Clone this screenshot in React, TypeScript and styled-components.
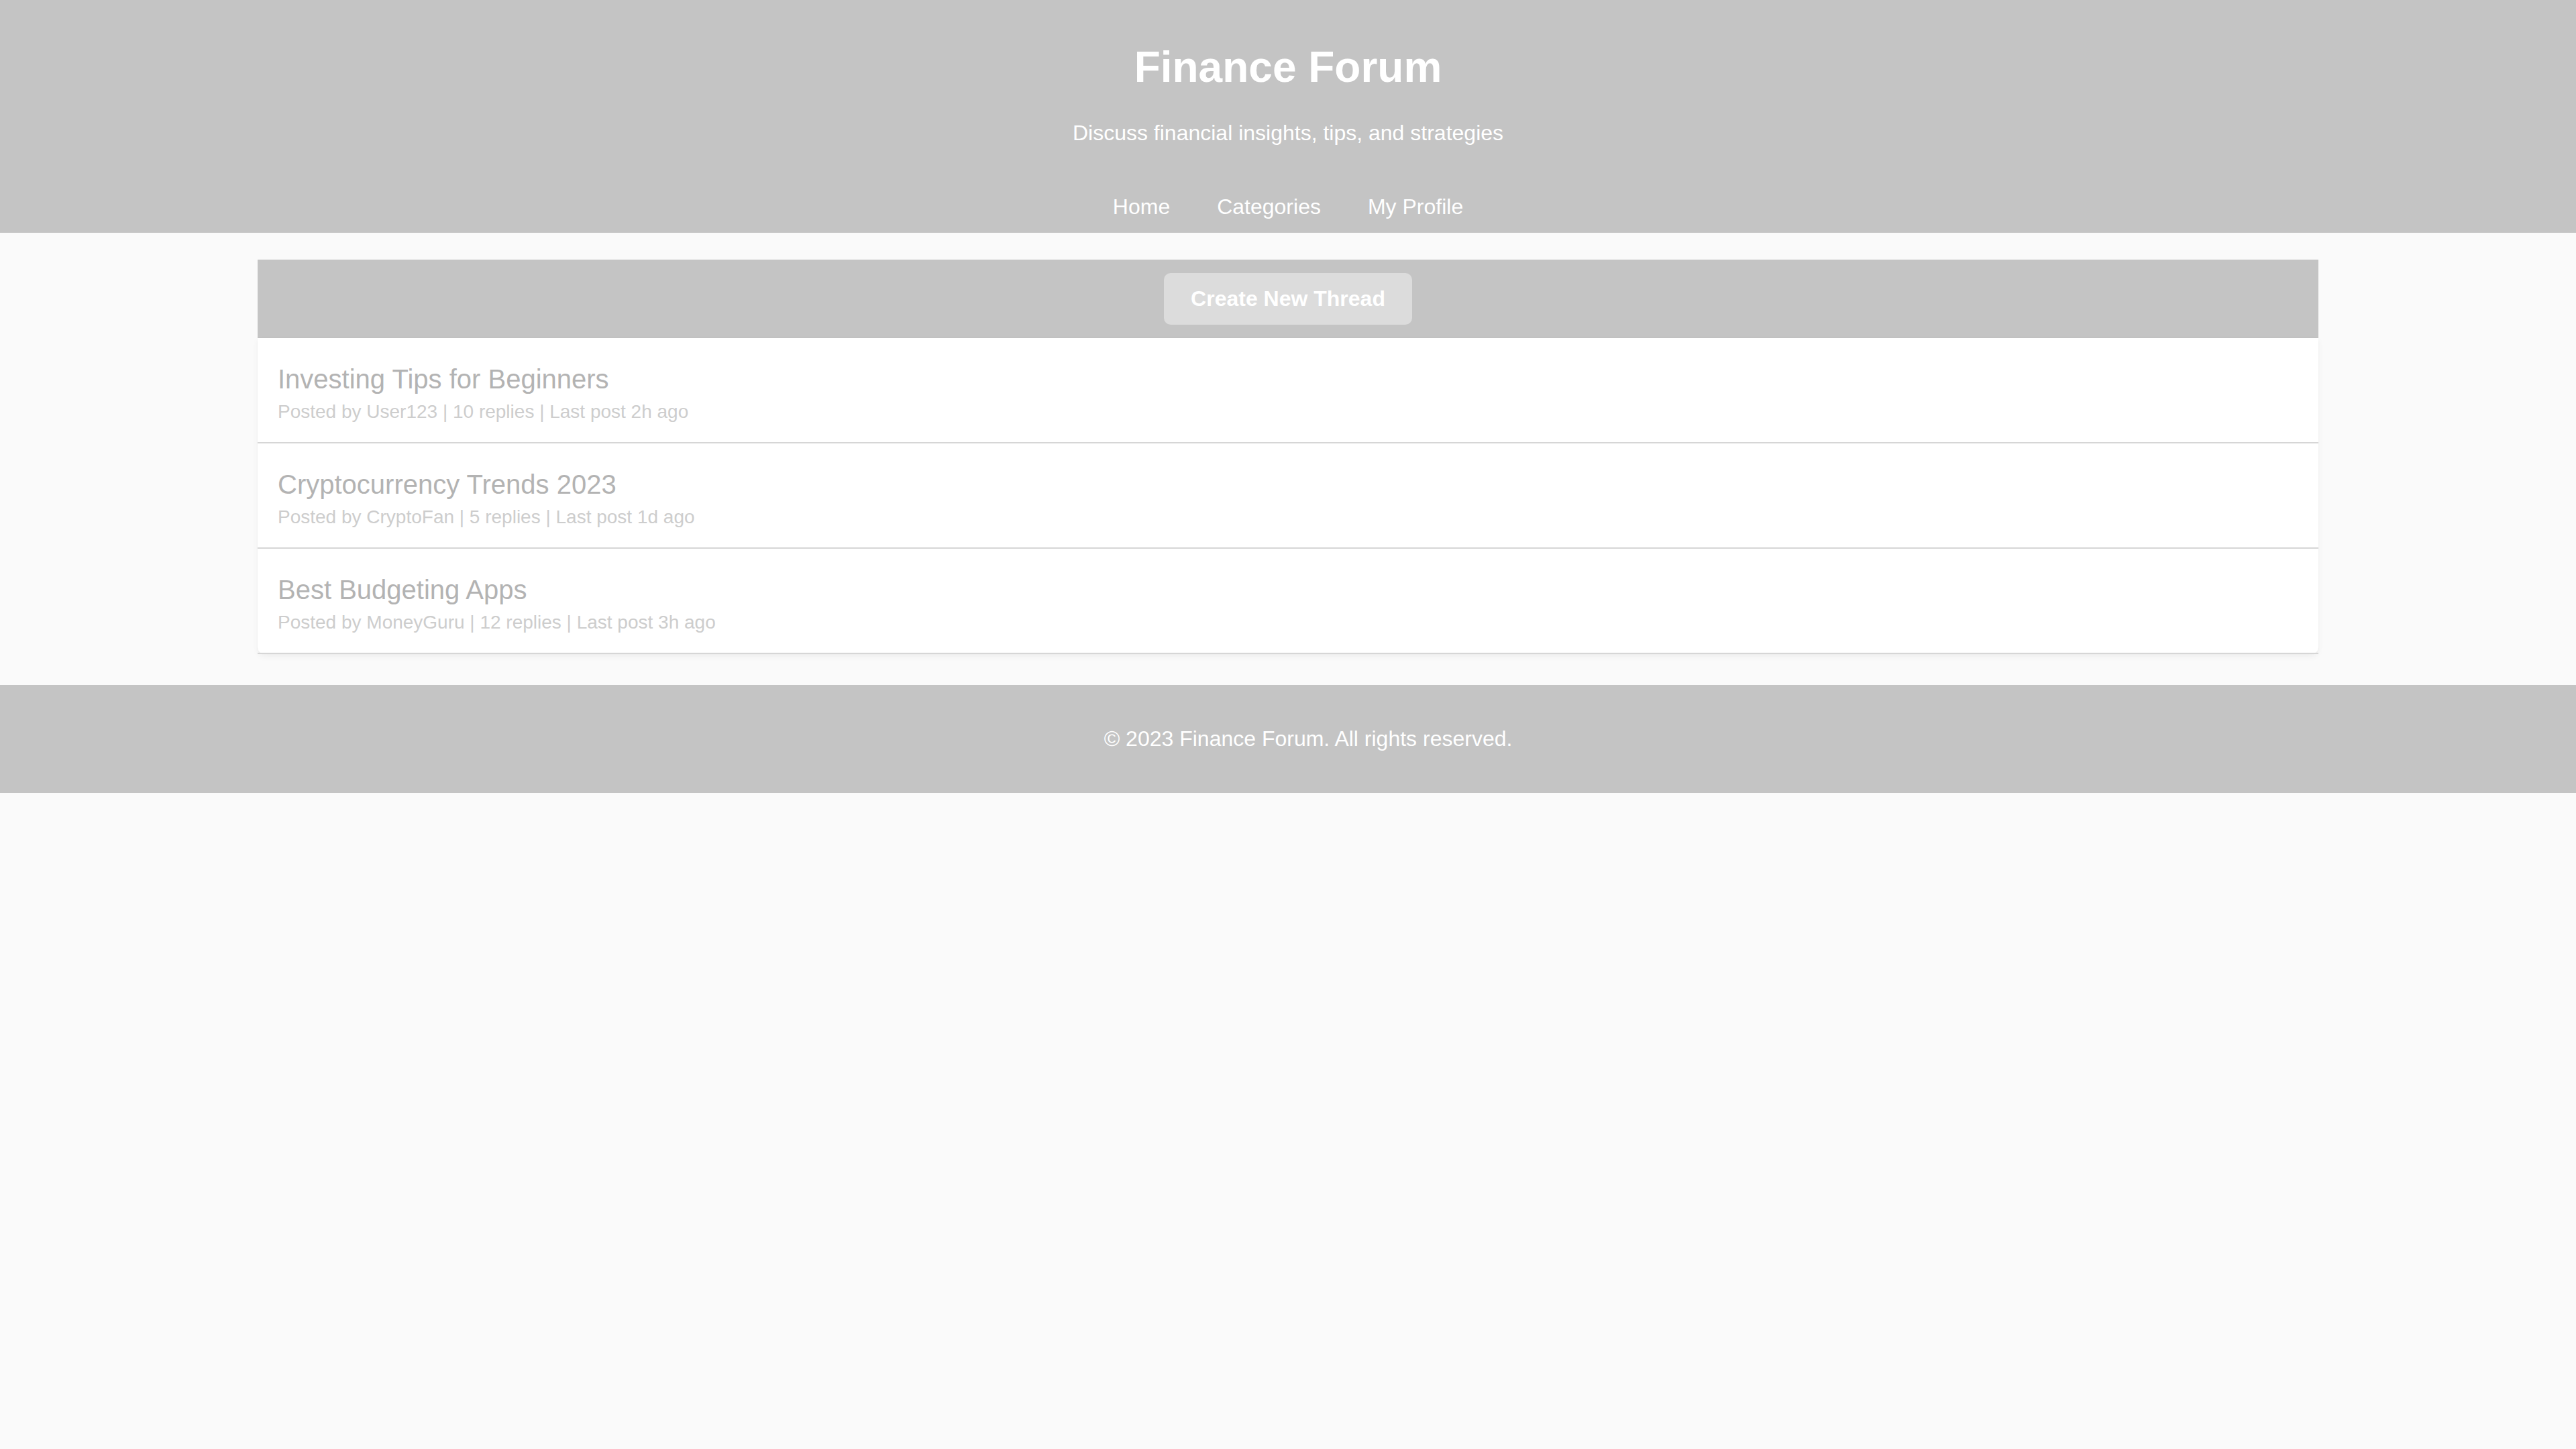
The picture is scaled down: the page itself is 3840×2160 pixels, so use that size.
import React from "react";
import styled, { createGlobalStyle } from "styled-components";

const GlobalStyle = createGlobalStyle`
  html, body {
    margin: 0;
    padding: 0;
    background: #fafafa;
    font-family: "Liberation Sans", Arial, sans-serif;
  }
  * { box-sizing: border-box; }
`;

const Header = styled.header`
  background: #c4c4c4;
  color: #ffffff;
  text-align: center;
  padding: 20px;
`;

const Title = styled.h1`
  margin: 42.88px 0 0;
  font-size: 64px;
  font-weight: 700;
  line-height: normal;
`;

const Subtitle = styled.p`
  margin: 42.88px 0 0;
  font-size: 32px;
  line-height: normal;
`;

const Nav = styled.nav`
  margin-top: 73px;
  display: flex;
  justify-content: center;
  gap: 70px;
`;

const NavLink = styled.a`
  color: #ffffff;
  text-decoration: none;
  font-size: 32px;
  line-height: normal;
`;

const Main = styled.main`
  width: 80%;
  margin: 40px auto 46px;
`;

const Toolbar = styled.div`
  background: #c4c4c4;
  padding: 20px;
  display: flex;
  justify-content: center;
`;

const Button = styled.button`
  background: #dcdcdc;
  color: #ffffff;
  border: none;
  border-radius: 10px;
  padding: 20px 40px;
  font-family: "Liberation Sans", Arial, sans-serif;
  font-size: 32px;
  font-weight: 700;
  line-height: normal;
  cursor: pointer;
`;

const ThreadList = styled.div`
  background: #ffffff;
  border-radius: 0 0 10px 10px;
  box-shadow: 0 4px 10px rgba(0, 0, 0, 0.05), 0 0 2px rgba(0, 0, 0, 0.06);
  display: flex;
  flex-direction: column;
`;

const ThreadItem = styled.div`
  padding: 29px 30px;
  border-bottom: 2px solid #d6d6d6;
`;

const ThreadTitle = styled.h3`
  margin: 0;
  font-size: 40px;
  font-weight: 400;
  line-height: 65px;
  color: #b3b3b3;
`;

const ThreadMeta = styled.p`
  margin: 0;
  font-size: 28px;
  line-height: 32px;
  color: #cdcdcd;
`;

const Footer = styled.footer`
  background: #c4c4c4;
  color: #ffffff;
  text-align: center;
  padding: 30px 0 30px 60px;
`;

const FooterText = styled.p`
  margin: 32px 0;
  font-size: 32px;
  line-height: normal;
`;

const threads = [
  { title: "Investing Tips for Beginners", meta: "Posted by User123 | 10 replies | Last post 2h ago" },
  { title: "Cryptocurrency Trends 2023", meta: "Posted by CryptoFan | 5 replies | Last post 1d ago" },
  { title: "Best Budgeting Apps", meta: "Posted by MoneyGuru | 12 replies | Last post 3h ago" },
];

export default function App() {
  return (
    <>
      <GlobalStyle />
      <Header>
        <Title>Finance Forum</Title>
        <Subtitle>Discuss financial insights, tips, and strategies</Subtitle>
        <Nav>
          <NavLink href="#">Home</NavLink>
          <NavLink href="#">Categories</NavLink>
          <NavLink href="#">My Profile</NavLink>
        </Nav>
      </Header>
      <Main>
        <Toolbar>
          <Button>Create New Thread</Button>
        </Toolbar>
        <ThreadList>
          {threads.map((t) => (
            <ThreadItem key={t.title}>
              <ThreadTitle>{t.title}</ThreadTitle>
              <ThreadMeta>{t.meta}</ThreadMeta>
            </ThreadItem>
          ))}
        </ThreadList>
      </Main>
      <Footer>
        <FooterText>© 2023 Finance Forum. All rights reserved.</FooterText>
      </Footer>
    </>
  );
}
